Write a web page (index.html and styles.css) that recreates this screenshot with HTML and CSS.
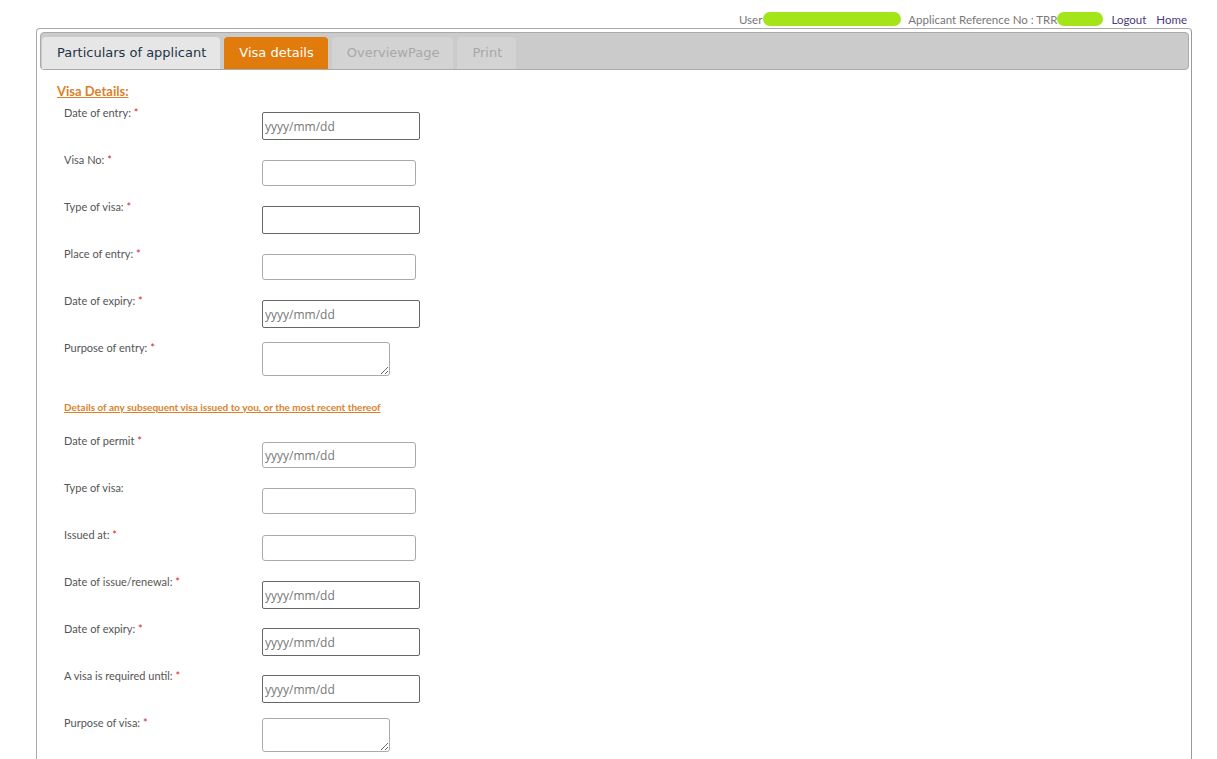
FILE: index.html
```html
<!DOCTYPE html>
<html lang="en">
<head>
<meta charset="UTF-8">
<title>Visa details</title>
<link rel="stylesheet" href="styles.css">
</head>
<body>

<div class="topbar">
    <span>User</span><span class="mask mask-user"></span>
    <span class="ref">Applicant Reference No : TRR</span><span class="mask mask-ref"></span>
    <a href="#" class="logout">Logout</a>
    <a href="#" class="home">Home</a>
</div>

<div class="panel">
    <ul class="tabs">
        <li class="tab">Particulars of applicant</li>
        <li class="tab active">Visa details</li>
        <li class="tab disabled">OverviewPage</li>
        <li class="tab disabled">Print</li>
    </ul>

    <div class="form">
        <h3 class="section-title">Visa Details:</h3>

        <div class="row">
            <label>Date of entry: <span class="req">*</span></label>
            <input type="text" class="date" placeholder="yyyy/mm/dd">
        </div>
        <div class="row">
            <label>Visa No: <span class="req">*</span></label>
            <input type="text" class="text">
        </div>
        <div class="row">
            <label>Type of visa: <span class="req">*</span></label>
            <input type="text" class="date">
        </div>
        <div class="row">
            <label>Place of entry: <span class="req">*</span></label>
            <input type="text" class="text">
        </div>
        <div class="row">
            <label>Date of expiry: <span class="req">*</span></label>
            <input type="text" class="date" placeholder="yyyy/mm/dd">
        </div>
        <div class="row">
            <label>Purpose of entry: <span class="req">*</span></label>
            <textarea></textarea>
        </div>

        <h4 class="sub-title">Details of any subsequent visa issued to you, or the most recent thereof</h4>

        <div class="row">
            <label>Date of permit <span class="req">*</span></label>
            <input type="text" class="text permit" placeholder="yyyy/mm/dd">
        </div>
        <div class="row">
            <label>Type of visa:</label>
            <input type="text" class="text">
        </div>
        <div class="row">
            <label>Issued at: <span class="req">*</span></label>
            <input type="text" class="text">
        </div>
        <div class="row">
            <label>Date of issue/renewal: <span class="req">*</span></label>
            <input type="text" class="date" placeholder="yyyy/mm/dd">
        </div>
        <div class="row">
            <label>Date of expiry: <span class="req">*</span></label>
            <input type="text" class="date" placeholder="yyyy/mm/dd">
        </div>
        <div class="row">
            <label>A visa is required until: <span class="req">*</span></label>
            <input type="text" class="date" placeholder="yyyy/mm/dd">
        </div>
        <div class="row">
            <label>Purpose of visa: <span class="req">*</span></label>
            <textarea class="late"></textarea>
        </div>
    </div>
</div>

</body>
</html>
```

FILE: styles.css
```css
body {
    margin: 0;
    font-family: Lato, "Open Sans", sans-serif;
    background: #fff;
    overflow: hidden;
}
.topbar {
    display: flex;
    justify-content: flex-end;
    align-items: center;
    height: 28px;
    padding: 10px 30px 0 0;
    box-sizing: border-box;
    font-size: 11.5px;
    color: #777;
}
.topbar a {
    color: #4b3a7c;
    text-decoration: none;
}
.mask {
    display: inline-block;
    height: 14px;
    border-radius: 7px;
    background: #a4e51a;
}
.mask-user { width: 138px; margin-left: 1px; }
.mask-ref { width: 46px; }
.ref { margin-left: 7px; }
.logout { margin-left: 8px; }
.home { margin-left: 10px; }

.panel {
    margin-left: 36px;
    width: 1156px;
    height: 760px;
    box-sizing: border-box;
    padding: 3px 2px 0 3px;
    border: 1px solid #aaa;
    border-right-color: #999;
    border-radius: 4px 4px 0 0;
}
.tabs {
    display: flex;
    gap: 4px;
    margin: 0;
    padding: 4px 0 0 1px;
    height: 38px;
    box-sizing: border-box;
    list-style: none;
    background: #cbcbcb;
    border: 1px solid #aaa;
    border-radius: 4px;
}
.tab {
    padding: 0 14px 0 15px;
    height: 32px;
    line-height: 31px;
    font-family: "DejaVu Sans", Verdana, sans-serif;
    font-size: 13px;
    color: #1e3448;
    background: #e6e6e6;
    border-radius: 4px 4px 0 0;
}
.tab.active {
    background: #e07b0c;
    color: #fff;
}
.tab.disabled {
    background: #d3d3d3;
    color: #a8a8a8;
}

.form {
    padding: 14px 0 0 17px;
}
.section-title {
    margin: 0 0 8px;
    font-size: 13px;
    line-height: 14px;
    font-weight: bold;
    color: #d9822b;
    text-decoration: underline;
}
.row {
    display: flex;
    align-items: flex-start;
    height: 47px;
    padding-left: 7px;
}
.row label {
    width: 198px;
    flex-shrink: 0;
    font-size: 11px;
    line-height: 14px;
    color: #555;
}
.req { color: #d9262c; }
input {
    box-sizing: border-box;
    font-family: "Open Sans", sans-serif;
    font-size: 12px;
    padding: 0 2px;
    outline: none;
}
input::placeholder { color: #777; }
input.date {
    width: 158px;
    height: 28px;
    margin-top: 6px;
    border: 1px solid #666;
    border-radius: 2px;
}
input.text {
    width: 154px;
    height: 26px;
    margin-top: 7px;
    border: 1px solid #aaa;
    border-radius: 3px;
}
input.permit { margin-top: 8px; }
textarea {
    box-sizing: border-box;
    width: 128px;
    height: 34px;
    margin: 1px 0 0;
    border: 1px solid #aaa;
    border-radius: 3px;
}
textarea.late { margin-top: 2px; }
.sub-title {
    margin: 12px 0 20px 7px;
    font-size: 10px;
    line-height: 14px;
    font-weight: bold;
    color: #d9822b;
    text-decoration: underline;
}
```
